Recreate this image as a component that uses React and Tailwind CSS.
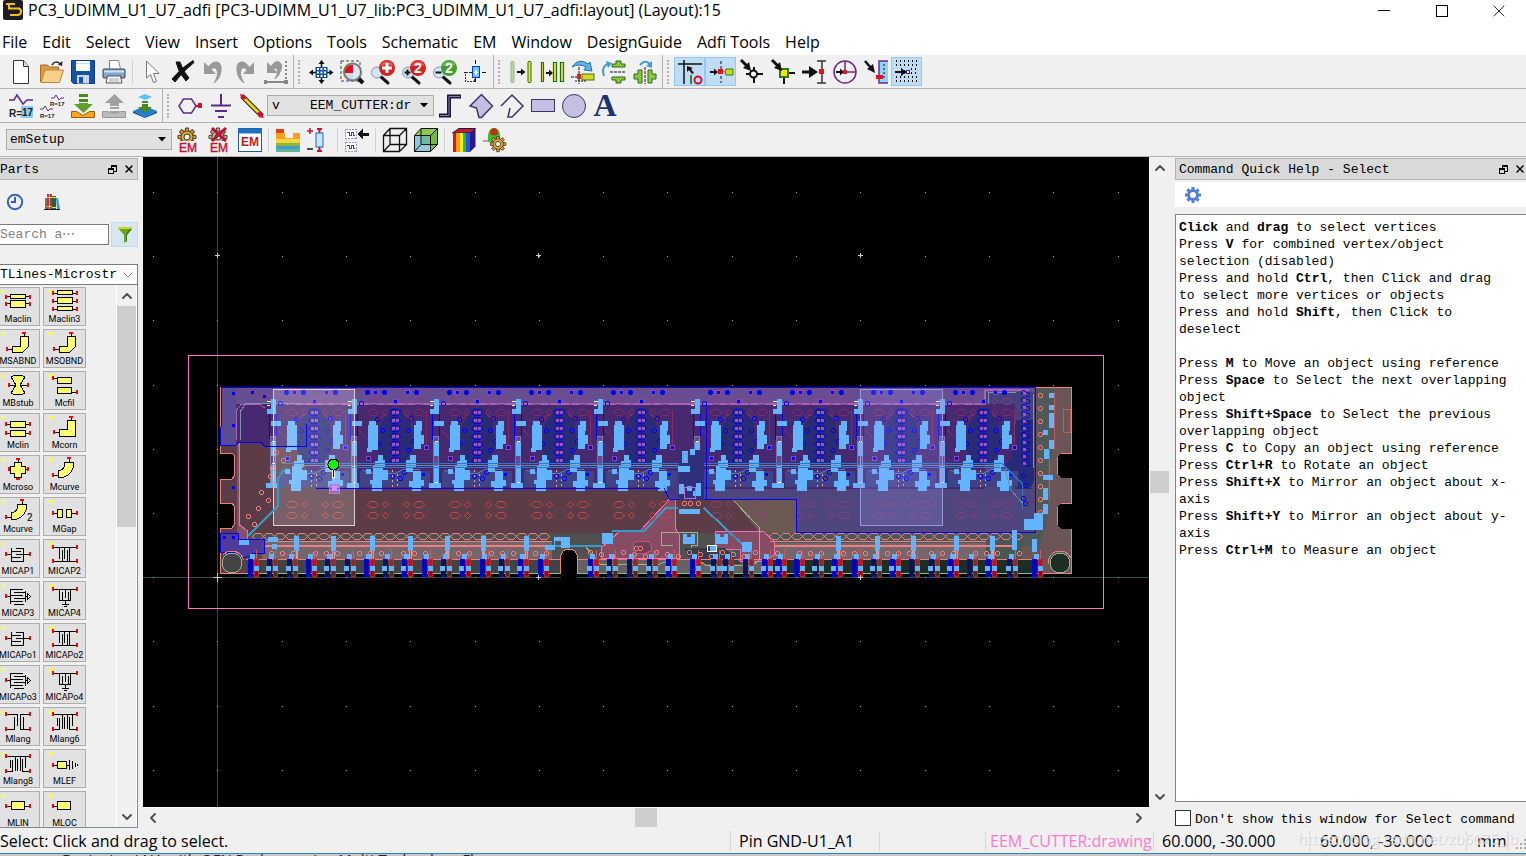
import { useState } from "react"
import { ChevronDown, ChevronLeft, ChevronRight, ChevronUp, X } from "lucide-react"

const menus = [
  "File",
  "Edit",
  "Select",
  "View",
  "Insert",
  "Options",
  "Tools",
  "Schematic",
  "EM",
  "Window",
  "DesignGuide",
  "Adfi Tools",
  "Help",
]

// ---------- toolbar building blocks ----------

function Icon({ children, crisp }) {
  return (
    <svg
      viewBox="0 0 24 24"
      className="h-6 w-6 shrink-0 overflow-visible"
      fill="none"
      shapeRendering={crisp ? "crispEdges" : undefined}
      aria-hidden="true"
    >
      {children}
    </svg>
  )
}

function ToolButton({ label, active, children }) {
  return (
    <button
      type="button"
      aria-label={label}
      aria-pressed={active}
      className={
        active
          ? "flex h-[29px] w-[31px] shrink-0 items-center justify-center border border-[#90c8f6] bg-[#c0dcf3]"
          : "flex h-[29px] w-[31px] shrink-0 items-center justify-center hover:bg-[#dcebf7]"
      }
    >
      {children}
    </button>
  )
}

function Separator() {
  return <div className="mx-[3px] h-6 w-px shrink-0 bg-[#d0d0d0]" />
}

function Grip() {
  return <div className="mr-1 ml-1 h-6 w-[3px] shrink-0 border-l-2 border-dotted border-[#b4b4b4]" />
}

function ToolGroup({ children, last }) {
  return (
    <div className={last ? "flex h-full items-center" : "flex h-full items-center border-r border-[#b4b4b4] pr-[2px]"}>
      {children}
    </div>
  )
}

function DropArrow() {
  return (
    <svg viewBox="0 0 8 5" className="pointer-events-none mr-[5px] h-[5px] w-2 shrink-0" aria-hidden="true">
      <path d="M0 0h8L4 4.500z" fill="#000" />
    </svg>
  )
}

// ---------- toolbar drawings ----------

function Magnifier({ color, sign, digit }) {
  return (
    <Icon>
      <path d="M9 16l8 7" stroke="#111" strokeWidth="3" strokeLinecap="round" />
      <circle cx="6" cy="12.500" r="5.500" fill="#cfe6f8" stroke="#8899aa" />
      <circle cx="16" cy="8" r="8" fill={color} />
      <path d="M9.500 6a7 7 0 0 1 13 0q-6-3-13 0" fill="#fff" opacity=".3" />
      {digit ? (
        <text x="16" y="13" textAnchor="middle" fontSize="14" fontWeight="700" fill="#fff" fontFamily="Liberation Sans">
          2
        </text>
      ) : (
        <path d="M16 3v10M11 8h10" stroke="#fff" strokeWidth="3" />
      )}
      {sign && <path d={sign === "+" ? "M5.500 9.500v6M2.500 12.500h6" : "M2.500 12.500h6"} stroke="#111" strokeWidth="2" />}
    </Icon>
  )
}

const gearAngles = [0, 45, 90, 135, 180, 225, 270, 315]

function Gear({ cx, cy, fill }) {
  return (
    <g transform={`translate(${cx} ${cy})`}>
      {gearAngles.map((a) => (
        <path key={a} transform={`rotate(${a})`} d="M-2-5l.5-4h3l.5 4z" fill={fill} stroke="#4a3a18" />
      ))}
      <circle r="6" fill={fill} stroke="#4a3a18" />
      <circle r="5.400" fill={fill} />
      <circle r="3" fill="#f0f0f0" stroke="#4a3a18" />
    </g>
  )
}

const icons = {
  newFile: (
    <Icon>
      <path d="M4.500 .5h10l5 6v17h-15z" fill="#fff" stroke="#333" />
      <path d="M14.500.5v6h5" fill="#ddd" stroke="#333" />
    </Icon>
  ),
  open: (
    <Icon>
      <path d="M.5 22V5h7l2 2h9v4" fill="#d99b4a" stroke="#a86c20" />
      <path d="M1 22.500L5 10h18.500l-4 12.500z" fill="#f8cf8a" stroke="#c08434" />
      <path d="M12 5q3-5 8-1.500" stroke="#222" strokeWidth="1.500" />
      <path d="M22.500 1l-.5 5-4-1.500z" fill="#222" />
    </Icon>
  ),
  save: (
    <Icon>
      <path d="M.5.5h23v23h-21l-2-2z" fill="#1453a8" stroke="#0c3c84" />
      <rect x="5" y="1" width="14" height="10" fill="#fff" />
      <path d="M5 3.500h14" stroke="#c4d8f0" />
      <rect x="6" y="15" width="12" height="8.500" fill="#cdd5de" />
      <rect x="8" y="17" width="4" height="6" fill="#1453a8" />
    </Icon>
  ),
  print: (
    <Icon>
      <path d="M7.500 9V.5h9l2 8.500" fill="#fff" stroke="#888" />
      <rect x="1" y="9" width="22" height="9" rx="1" fill="#7fa8cc" stroke="#345" />
      <path d="M2 11.500h20" stroke="#cfe2f2" strokeWidth="2" />
      <path d="M5.500 16h13l1.500 7H4z" fill="#f4f8fb" stroke="#555" />
      <path d="M7 19h10M7 21h10" stroke="#aaa" />
    </Icon>
  ),
  cursor: (
    <Icon>
      <path d="M6.500 1v17l4-3.500 3 8 3-1-3-8h5.500z" fill="#fff" stroke="#777" />
    </Icon>
  ),
  remove: (
    <Icon>
      <path d="M1 19Q10 8 22 .5l1 2Q12 11 4 22z" fill="#111" stroke="#111" />
      <path d="M5 2l4 0q2 8 9 16l-3 3Q7 12 5 2z" fill="#111" stroke="#111" />
    </Icon>
  ),
  undo: (
    <Icon>
      <path d="M5 9q5-8 10-7t4 9-7 12q5-8 3-13t-8 1z" fill="#999" stroke="#999" />
      <path d="M2 2v12h12z" fill="#999" />
    </Icon>
  ),
  redo: (
    <Icon>
      <path d="M17 9Q13 1 8 2T4 11t7 12q-5-8-3-13t7 1z" fill="#999" stroke="#999" />
      <path d="M21 2v12H10z" fill="#999" />
    </Icon>
  ),
  undoAll: (
    <Icon>
      <path d="M6 8q5-8 9-6t2 8-6 9q4-7 2-10t-5 2z" fill="#999" stroke="#999" />
      <path d="M3 2v11h11z" fill="#999" />
      <path d="M1 22h20" stroke="#888" strokeWidth="2" />
      <path d="M22 1v20" stroke="#888" strokeWidth="2" strokeDasharray="2 2" />
      <path d="M20 20h4v4h-4zM0 20h3v4H0z" fill="#888" />
    </Icon>
  ),
  pan: (
    <Icon>
      <path d="M12.500 3v4M12.500 18v4M3 12.500h4M18 12.500h4" stroke="#111" strokeWidth="1.500" />
      <path d="M12.500 0l3 4h-6zM12.500 24l3-4h-6zM0 12.500l4-3v6zM24.500 12.500l-4-3v6z" fill="#111" />
      <rect x="6.500" y="7" width="12" height="11" fill="#0a4fa0" />
      <path
        d="M8 8h2v2H8zm3.500 0h2v2h-2zM15 8h2v2h-2zM8 11.500h2v2H8zm3.500 0h2v2h-2zm3.500 0h2v2h-2zM8 15h2v2H8zm3.500 0h2v2h-2zm3.500 0h2v2h-2z"
        fill="#fff"
      />
    </Icon>
  ),
  zoomArea: (
    <Icon>
      <rect x="1" y="1" width="19" height="20" fill="#f4f4cf" stroke="#2038a0" strokeDasharray="3 2" />
      <path d="M18 18l5 5" stroke="#111" strokeWidth="4" />
      <circle cx="12.500" cy="12" r="8.500" fill="#c8d8ee" stroke="#777" strokeWidth="2" />
      <path d="M13 13V5a7 7 0 0 0-8 8z" fill="#e01020" />
      <path d="M13 12V5a7 7 0 0 1 0 14z" fill="#fff" opacity=".4" />
    </Icon>
  ),
  center: (
    <Icon crisp>
      <path d="M11.500 0v24M0 12.500h24" stroke="#111" strokeDasharray="4 2" />
      <path d="M1.500 12.500h9v9h-9z" stroke="#333" strokeDasharray="2 1" />
      <path d="M8.500 6.500h7v11h-7z" fill="#5cc8ff" stroke="#0d3bb0" />
      <path d="M11 10h2v5h-2zM10 12h4v1h-4z" fill="#fff" />
    </Icon>
  ),
  moveTo: (
    <Icon>
      <rect x="2" y="1.500" width="3" height="21" rx="1" fill="#b9d3a0" stroke="#8fbf8f" />
      <rect x="19" y="1.500" width="3" height="21" rx="1" fill="#ffe600" stroke="#1a6a2a" />
      <path d="M8 12h5" stroke="#111" strokeWidth="2" />
      <path d="M12 8.500l4.500 3.500-4.500 3.500z" fill="#111" />
    </Icon>
  ),
  copyTo: (
    <Icon>
      <path d="M1.500 2.500h2v19h-2zM13.500 2.500h3v19h-3zM20.500 2.500h3v19h-3z" fill="#ffe600" stroke="#1a6a2a" strokeWidth="1.200" />
      <path d="M6 13h4" stroke="#111" strokeWidth="2" />
      <path d="M9 9.500l4 3.500-4 3.500z" fill="#111" />
    </Icon>
  ),
  rotate: (
    <Icon>
      <path d="M1 7Q8-3 17 4l2-2 2 9-8-1 2-3Q8 3 1 7z" fill="#5db4e6" stroke="#1d6fae" />
      <path d="M8 7v17M0 17h8" stroke="#111" strokeDasharray="3 1" />
      <rect x="6" y="14" width="4" height="5" fill="#e02020" />
      <rect x="11" y="14" width="12" height="6" fill="#d8d820" stroke="#3a7a20" />
      <path d="M4 21h11" stroke="#111" strokeDasharray="2 1" />
    </Icon>
  ),
  mirrorY: (
    <Icon>
      <path d="M2 16Q-1 8 5 4" stroke="#3b9bd8" strokeWidth="2" />
      <path d="M4 1l6 2-4 5z" fill="#3b9bd8" />
      <path d="M10 7h13V4h-4V1h-5v3h-4zM10 17h13v3h-4v3h-5v-3h-4z" fill="#8cc63a" stroke="#2c6a1c" />
      <path d="M8 12h16" stroke="#111" strokeDasharray="3 1" />
    </Icon>
  ),
  mirrorX: (
    <Icon>
      <path d="M7 5q5-6 10-1" stroke="#3b9bd8" strokeWidth="2" />
      <path d="M19 1v7l-6-2z" fill="#3b9bd8" />
      <path d="M5 10h4v13H5v-4H1v-5h4zM19 10h-4v13h4v-4h4v-5h-4z" fill="#8cc63a" stroke="#2c6a1c" />
      <path d="M12 7v17" stroke="#111" strokeDasharray="3 1" />
    </Icon>
  ),
  origin: (
    <Icon>
      <path d="M6 0v24M0 4h24" stroke="#111" strokeWidth="1.500" />
      <path d="M9 6l6 2-2 1 3 4-2 1-3-4-2 2z" fill="#111" />
      <path d="M13 15v9" stroke="#2a8a3a" strokeWidth="2" />
      <circle cx="20" cy="20" r="3.500" stroke="#d01030" strokeWidth="2" />
    </Icon>
  ),
  snapPin: (
    <Icon>
      <path d="M12 1v22" stroke="#111" strokeDasharray="3 2" />
      <path d="M1 12h5" stroke="#111" strokeWidth="2" />
      <path d="M5 8.500l4 3.500-4 3.500z" fill="#111" />
      <rect x="9" y="9" width="5" height="5" fill="#e81020" />
      <path d="M14 11.500h4" stroke="#d09010" />
      <path d="M17 9h7v6h-7q-2-3 0-6z" fill="#c8d818" stroke="#2c7a1c" />
    </Icon>
  ),
  snapVertex: (
    <Icon>
      <path d="M14 7v16M6 14h17" stroke="#111" strokeWidth="2" />
      <circle cx="13.500" cy="14" r="3.500" fill="#fff" stroke="#111" strokeWidth="2" />
      <path d="M1 0l6 6" stroke="#111" strokeWidth="3" />
      <path d="M11 11L3 8l6-6z" fill="#111" />
    </Icon>
  ),
  snapMid: (
    <Icon>
      <path d="M13 18v6M18 13h6" stroke="#111" strokeWidth="2" />
      <rect x="9" y="9" width="8" height="8" fill="#ffe600" stroke="#2c7a1c" strokeWidth="2" />
      <path d="M1 0l6 6" stroke="#111" strokeWidth="3" />
      <path d="M11 11L3 8l6-6z" fill="#111" />
    </Icon>
  ),
  snapEdge: (
    <Icon>
      <path d="M15 1h9M15 23h9M20 1v22" stroke="#333" strokeWidth="1.500" />
      <path d="M0 12h8" stroke="#111" strokeWidth="3" />
      <path d="M7 6l9 6-9 6z" fill="#111" />
      <rect x="17" y="9" width="5" height="5" fill="#e81020" />
    </Icon>
  ),
  snapArc: (
    <Icon>
      <circle cx="12" cy="12" r="11" stroke="#6a2a8a" strokeWidth="1.500" />
      <path d="M12 1v11h11" stroke="#6a2a8a" strokeWidth="1.500" />
      <path d="M3 12h5" stroke="#111" strokeWidth="2" />
      <path d="M7 8.500l4 3.500-4 3.500z" fill="#111" />
      <rect x="10" y="10" width="4" height="4" fill="#e81020" />
    </Icon>
  ),
  snapIntersect: (
    <Icon>
      <path d="M24 1h-9v22h9" fill="#8fd4f4" stroke="#6a2a8a" strokeWidth="1.500" />
      <path d="M20 4v16" stroke="#111" strokeDasharray="2 2" />
      <path d="M1 1l6 7" stroke="#111" strokeWidth="2.500" />
      <path d="M11 13L3 9l6-5z" fill="#111" />
      <path d="M12 15h7v4h-7z" fill="#e81020" />
    </Icon>
  ),
  snapGrid: (
    <Icon crisp>
      <path
        d="M1 1h22M1 5h22M1 17h22M1 21h22M16 9h8M16 13h8"
        stroke="#111"
        strokeWidth="2"
        strokeDasharray="1 3"
      />
      <path d="M0 12h8" stroke="#111" strokeWidth="2" />
      <path d="M6 8l6 4-6 4z" fill="#111" />
      <path d="M11.500 10.500h3v3h-3z" fill="#fff" stroke="#4020a0" />
    </Icon>
  ),
  tune: (
    <Icon>
      <path d="M0 6h5l3-5 6 9 4-4h6" stroke="#5a2a8a" strokeWidth="1.500" />
      <rect x="12" y="12" width="12" height="12" fill="#8fc8ee" />
      <text x="0" y="23" fontSize="10" fontWeight="700" fill="#222" fontFamily="Liberation Sans">
        R=
      </text>
      <text x="13" y="22" fontSize="10" fontWeight="700" fill="#112233" fontFamily="Liberation Sans">
        17
      </text>
    </Icon>
  ),
  tuneAll: (
    <Icon>
      <path d="M11 4h3l2-3 3 5 2-2h3M0 15h3l2-3 3 5 2-2h3" stroke="#5a2a8a" />
      <text x="10" y="12" fontSize="6" fontWeight="700" fill="#222" fontFamily="Liberation Sans">
        R=17
      </text>
      <text x="0" y="24" fontSize="6" fontWeight="700" fill="#222" fontFamily="Liberation Sans">
        R=17
      </text>
    </Icon>
  ),
  importDown: (
    <Icon>
      <path d="M.5 17.500h5l6.500 4 6.500-4h5v6H.5z" fill="#f8a818" stroke="#9a5a10" />
      <path d="M8 0h9v3H8zM8 5h9v3H8z" fill="#4a8a1c" />
      <path d="M8 9h9v1h5l-9.500 9L3 10h5z" fill="#5fa02a" />
    </Icon>
  ),
  exportUp: (
    <Icon>
      <path d="M.5 17.500h5l6.500 2 6.500-2h5v6H.5z" fill="#bbb" stroke="#999" />
      <path d="M12.500 0L22 9h-5v3H8V9H3zM8 13h9v2H8zM8 17h9v2H8z" fill="#a0a0a0" />
    </Icon>
  ),
  stackDown: (
    <Icon>
      <path d="M0 17l12-5 12 5-12 6z" fill="#1f7fd0" />
      <path d="M0 17v2l12 5 12-5v-2l-12 6z" fill="#0c4f98" />
      <path d="M5 3l7-3 7 3-7 3z" fill="#5ac0f4" />
      <path d="M9 7h6v2H9zM9 10h6v3h4l-7 6-7-6h4z" fill="#4a8a1c" />
    </Icon>
  ),
  pin: (
    <Icon>
      <path d="M5.500 5h8l4.500 7-4.500 7h-8L1 12z" stroke="#5a2a8a" strokeWidth="1.500" />
      <path d="M18 12h3" stroke="#d01030" strokeWidth="2" />
      <rect x="20" y="9" width="4" height="5" fill="#d01030" />
    </Icon>
  ),
  ground: (
    <Icon>
      <path d="M12 0v11M2 11.500h20M6 17h12M9 23h6" stroke="#5a2a8a" strokeWidth="2" />
    </Icon>
  ),
  pencil: (
    <Icon>
      <path d="M2 2l20 20" stroke="#222" strokeWidth="5" />
      <path d="M3 3l18 18" stroke="#e8d820" strokeWidth="3" />
      <path d="M0 0l4 1 2 4-4 1zM24 24l-5-1-2-4 4-2z" fill="#e01028" />
    </Icon>
  ),
  path: (
    <Icon>
      <path d="M1 21.500h10v-19h12" stroke="#1b1836" strokeWidth="4" />
      <path d="M2 21.500h9v-19h11" stroke="#8a7ab8" />
    </Icon>
  ),
  polygon: (
    <Icon>
      <path d="M1 12L12.500.5l11 11.500-11 11.500H10L7.500 14z" fill="#c3c0e4" stroke="#3a3664" strokeWidth="1.500" />
    </Icon>
  ),
  polyline: (
    <Icon>
      <path d="M1 12L12 1l11 11-11 11H8l2-9" stroke="#3a3664" strokeWidth="1.500" />
    </Icon>
  ),
  rect: (
    <Icon>
      <rect x=".5" y="5.500" width="23" height="12" fill="#c3c0e4" stroke="#3a3664" />
    </Icon>
  ),
  circle: (
    <Icon>
      <circle cx="12" cy="12" r="11.500" fill="#c3c0e4" stroke="#3a3664" />
    </Icon>
  ),
  text: (
    <Icon>
      <text x="12" y="22" textAnchor="middle" fontSize="32" fontWeight="700" fill="#1a3470" fontFamily="Liberation Serif">
        A
      </text>
    </Icon>
  ),
  emSetup: (
    <Icon>
      <Gear cx={11} cy={9} fill="#d9a441" />
      <rect x="0" y="13" width="24" height="11" fill="#f0f0f0" />
      <text x="12" y="24" textAnchor="middle" fontSize="12" fill="#c01030" stroke="#c01030" strokeWidth=".4" fontFamily="Liberation Sans">
        EM
      </text>
    </Icon>
  ),
  emStop: (
    <Icon>
      <Gear cx={11} cy={9} fill="#b8b8b8" />
      <rect x="0" y="13" width="24" height="11" fill="#f0f0f0" />
      <path d="M5 0l14 13M19 0L5 13" stroke="#c01030" strokeWidth="3" />
      <text x="12" y="24" textAnchor="middle" fontSize="12" fill="#c01030" stroke="#c01030" strokeWidth=".4" fontFamily="Liberation Sans">
        EM
      </text>
    </Icon>
  ),
  emWindow: (
    <Icon>
      <rect x=".5" y=".5" width="23" height="23" fill="#fff" stroke="#1a5aa8" />
      <path d="M0 3h24" stroke="#1f6fc0" strokeWidth="5" />
      <text x="12" y="18" textAnchor="middle" fontSize="12" fontWeight="700" fill="#c01818" fontFamily="Liberation Sans">
        EM
      </text>
    </Icon>
  ),
  substrate: (
    <Icon crisp>
      <path d="M0 1h8v4H0z" fill="#e04020" />
      <path d="M0 5h9v5h8V5h7v7H0z" fill="#f8a020" />
      <path d="M0 11h24v4H0z" fill="#f4d840" />
      <path d="M0 15h24v3H0z" fill="#8cb83a" />
      <path d="M0 18h24v3H0z" fill="#4a98c8" />
      <path d="M0 21h24v3H0z" fill="#58b898" />
    </Icon>
  ),
  port: (
    <Icon>
      <path d="M3 0v6M0 3h6" stroke="#c01030" strokeWidth="1.500" />
      <path d="M0 21h6" stroke="#111" strokeWidth="1.500" />
      <path d="M12.500 0v24M10 1h5M10 23h5" stroke="#c01030" strokeWidth="2" />
      <rect x="9" y="5" width="7" height="14" fill="#c4e8f8" stroke="#2860c0" />
    </Icon>
  ),
  portEdit: (
    <Icon crisp>
      <path d="M.5 1.500h11v9H.5zM.5 14.500h11v9H.5z" fill="#fff" stroke="#8898d8" strokeDasharray="2 1" />
      <path d="M2 4.500h2v3h2v-3h2v3h2M2 17.500h2v3h2v-3h2v3h2" stroke="#444488" />
      <path d="M15 6h9" stroke="#111" strokeWidth="3" />
      <path d="M12 6l6-5v10z" fill="#111" />
    </Icon>
  ),
  cube: (
    <Icon>
      <path
        d="M.5 7.500h16v16H.5zM7 .5h16.500v16H7zM.5 7.500L7 .5M16.500 7.500l7-7M.5 23.500L7 16.500M16.500 23.500l7-7"
        stroke="#111"
        strokeWidth="1.300"
      />
    </Icon>
  ),
  cubeSolid: (
    <Icon>
      <path d="M.5 7.500L7 .5h16.500l-7 7z" fill="#8fc850" />
      <path d="M16.500 7.500l7-7v16l-7 7z" fill="#78b838" />
      <path d="M.5 7.500h16v16H.5z" fill="#90c8e0" />
      <path d="M7 7.500h9.500v9H7z" fill="#70b8a0" />
      <path d="M.5 7.500h16v16H.5zM7 .5h16.500v16H7zM.5 7.500L7 .5M16.500 7.500l7-7M.5 23.500L7 16.500M16.500 23.500l7-7" stroke="#111" />
    </Icon>
  ),
  fieldView: (
    <Icon>
      <path d="M.5 5L7 .5h16.500l-5 4.500z" fill="#c02020" stroke="#201060" />
      <path d="M1 5h3v19H1z" fill="#d81818" />
      <path d="M4 5h4v19H4z" fill="#f8a010" />
      <path d="M8 5h3v19H8z" fill="#f4f020" />
      <path d="M11 5h3v19h-3z" fill="#30b830" />
      <path d="M14 5h4v19h-4z" fill="#2058e0" />
      <path d="M18 5l5.500-4.500v18L18 24z" fill="#281888" />
    </Icon>
  ),
  farField: (
    <Icon>
      <path d="M0 13h10" stroke="#e03030" />
      <path d="M5 14Q4 0 11 0t6 12q-3 4-7 3T5 14" fill="#38c030" />
      <path d="M7 6q0-6 4-6t4 6q-4 3-8 0" fill="#c03010" />
      <g transform="translate(4 5) scale(.85)">
        <Gear cx={13} cy={13} fill="#d9a441" />
      </g>
    </Icon>
  ),
}

function Toolbars() {
  return (
    <div className="shrink-0 bg-[#f0f0f0]">
      <div className="flex h-[34px] items-center border-b border-[#b4b4b4]">
        <ToolGroup>
          <div className="w-[5px]" />
          <ToolButton label="New">{icons.newFile}</ToolButton>
          <ToolButton label="Open">{icons.open}</ToolButton>
          <ToolButton label="Save">{icons.save}</ToolButton>
          <ToolButton label="Print">{icons.print}</ToolButton>
          <Separator />
          <ToolButton label="Pointer">{icons.cursor}</ToolButton>
          <ToolButton label="Delete">{icons.remove}</ToolButton>
          <ToolButton label="Undo">{icons.undo}</ToolButton>
          <ToolButton label="Redo">{icons.redo}</ToolButton>
          <ToolButton label="Undo vertex">{icons.undoAll}</ToolButton>
        </ToolGroup>
        <ToolGroup>
          <Grip />
          <ToolButton label="View all">{icons.pan}</ToolButton>
          <ToolButton label="Zoom area">{icons.zoomArea}</ToolButton>
          <ToolButton label="Zoom in point">
            <Magnifier color="#d8201c" />
          </ToolButton>
          <ToolButton label="Zoom in by 2">
            <Magnifier color="#d8201c" sign="+" digit />
          </ToolButton>
          <ToolButton label="Zoom out by 2">
            <Magnifier color="#3fa02c" sign="-" digit />
          </ToolButton>
          <ToolButton label="Center">{icons.center}</ToolButton>
        </ToolGroup>
        <ToolGroup>
          <Grip />
          <ToolButton label="Move">{icons.moveTo}</ToolButton>
          <ToolButton label="Copy">{icons.copyTo}</ToolButton>
          <ToolButton label="Rotate">{icons.rotate}</ToolButton>
          <ToolButton label="Mirror about X">{icons.mirrorY}</ToolButton>
          <ToolButton label="Mirror about Y">{icons.mirrorX}</ToolButton>
        </ToolGroup>
        <ToolGroup last>
          <Grip />
          <ToolButton label="Set origin" active>
            {icons.origin}
          </ToolButton>
          <ToolButton label="Snap to pin" active>
            {icons.snapPin}
          </ToolButton>
          <ToolButton label="Snap to vertex">{icons.snapVertex}</ToolButton>
          <ToolButton label="Snap to midpoint">{icons.snapMid}</ToolButton>
          <ToolButton label="Snap to edge">{icons.snapEdge}</ToolButton>
          <ToolButton label="Snap to arc center">{icons.snapArc}</ToolButton>
          <ToolButton label="Snap to intersection">{icons.snapIntersect}</ToolButton>
          <ToolButton label="Snap to grid" active>
            {icons.snapGrid}
          </ToolButton>
        </ToolGroup>
      </div>

      <div className="flex h-[34px] items-center border-b border-[#b4b4b4]">
        <ToolGroup>
          <div className="w-[5px]" />
          <ToolButton label="Tune parameter">{icons.tune}</ToolButton>
          <ToolButton label="Tune all">{icons.tuneAll}</ToolButton>
          <ToolButton label="Push into">{icons.importDown}</ToolButton>
          <ToolButton label="Pop out">{icons.exportUp}</ToolButton>
          <ToolButton label="Layers">{icons.stackDown}</ToolButton>
        </ToolGroup>
        <ToolGroup last>
          <Grip />
          <ToolButton label="Insert pin">{icons.pin}</ToolButton>
          <ToolButton label="Insert ground">{icons.ground}</ToolButton>
          <ToolButton label="Insert trace">{icons.pencil}</ToolButton>
          <div className="flex h-[21px] w-[167px] items-center border border-[#adadad] bg-[#e1e1e1] font-['Liberation_Mono'] text-[13px]">
            <span className="w-[42px] pl-1">v</span>
            <select aria-label="Entry layer" className="min-w-0 flex-1 appearance-none bg-transparent outline-none">
              <option>EEM_CUTTER:dr</option>
            </select>
            <DropArrow />
          </div>
          <ToolButton label="Insert path">{icons.path}</ToolButton>
          <ToolButton label="Insert polygon">{icons.polygon}</ToolButton>
          <ToolButton label="Insert polyline">{icons.polyline}</ToolButton>
          <ToolButton label="Insert rectangle">{icons.rect}</ToolButton>
          <ToolButton label="Insert circle">{icons.circle}</ToolButton>
          <ToolButton label="Insert text">{icons.text}</ToolButton>
        </ToolGroup>
      </div>

      <div className="flex h-[34px] items-center border-b border-[#b4b4b4] pl-[6px]">
        <div className="flex h-[21px] w-[166px] items-center border border-[#adadad] bg-[#e1e1e1] font-['Liberation_Mono'] text-[13px]">
          <select aria-label="EM setup" className="min-w-0 flex-1 appearance-none bg-transparent pl-[3px] outline-none">
            <option>emSetup</option>
          </select>
          <DropArrow />
        </div>
        <ToolButton label="EM setup">{icons.emSetup}</ToolButton>
        <ToolButton label="Stop EM">{icons.emStop}</ToolButton>
        <ToolButton label="EM window">{icons.emWindow}</ToolButton>
        <Separator />
        <ToolButton label="Substrate">{icons.substrate}</ToolButton>
        <ToolButton label="Port editor">{icons.port}</ToolButton>
        <Separator />
        <ToolButton label="Edit ports">{icons.portEdit}</ToolButton>
        <Separator />
        <ToolButton label="Wireframe view">{icons.cube}</ToolButton>
        <ToolButton label="Solid view">{icons.cubeSolid}</ToolButton>
        <Separator />
        <ToolButton label="Field view">{icons.fieldView}</ToolButton>
        <ToolButton label="Far field">{icons.farField}</ToolButton>
      </div>
    </div>
  )
}

// ---------- parts palette ----------

const body = { fill: "#ffff70", stroke: "#000" }

function Pins({ d }) {
  return <path d={d} stroke="#f00" strokeWidth="2" />
}

const partShapes = {
  coupled: (
    <>
      <path d="M2 7.500h24M2 14.500h24" stroke="#000" />
      <path d="M6.500 5.500h15v4h-15zM6.500 11.500h15v7h-15z" {...body} />
      <Pins d="M2 6v4M26 6v4M2 13v4M26 13v4" />
    </>
  ),
  coupled3: (
    <>
      <path d="M2 4h24M2 12h24M2 20h24" stroke="#000" />
      <path d="M6.500 1.500h15v4h-15zM6.500 8.500h15v6h-15zM6.500 17.500h15v4h-15z" {...body} />
      <Pins d="M2 2v4M26 2v4M2 10v4M26 10v4M2 18v4M26 18v4" />
    </>
  ),
  bend: (
    <>
      <path d="M20 2v4M3 18h5" stroke="#000" />
      <path d="M16 5h8v11l-5 5H8v-6h8z" {...body} />
      <Pins d="M18 2h4M3 16v4" />
    </>
  ),
  stub: (
    <>
      <path d="M4 12h20" stroke="#000" />
      <path d="M7 4q7-4 14 0l-5 8 5 8q-7 4-14 0l5-8z" {...body} />
      <Pins d="M5 10v4M24 10v4" />
    </>
  ),
  filter: (
    <>
      <path d="M3 5h4M21 19h5" stroke="#000" />
      <path d="M6.500 4.500h14v6h-14zM6.500 14.500h14v6h-14z" {...body} />
      <Pins d="M2 3v4M26 17v4" />
    </>
  ),
  lines: (
    <>
      <path d="M2 9h24M2 18h24" stroke="#000" />
      <path d="M6.500 6.500h15v6h-15zM6.500 15.500h15v6h-15z" {...body} />
      <Pins d="M2 7v4M26 7v4M2 16v4M26 16v4" />
    </>
  ),
  corner: (
    <>
      <path d="M20 2v4M3 17h5" stroke="#000" />
      <path d="M16 5h8v16H8v-7h8z" {...body} />
      <Pins d="M18 2h4M3 15v4" />
    </>
  ),
  cross: (
    <>
      <path d="M14 2v20M4 12h20" stroke="#000" />
      <path d="M10 5h7v4h4v7h-4v4h-7v-4H6V9h4z" {...body} />
      <Pins d="M12 2h4M12 22h4M5 10v4M24 10v4" />
    </>
  ),
  curve: (
    <>
      <path d="M18 1v4M2 18h5" stroke="#000" />
      <path d="M14 5h8v6q-2 9-15 10v-7q7-1 7-9z" {...body} />
      <Pins d="M16 1h4M2 16v4" />
    </>
  ),
  gap: (
    <>
      <path d="M2 14h24" stroke="#000" />
      <path d="M11 10h7v9h-7z" fill="#e1e1e1" />
      <path d="M6.500 10.500h5v8h-5zM15.500 10.500h5v8h-5z" {...body} />
      <Pins d="M2 12v4M26 12v4" />
    </>
  ),
  cap: (
    <>
      <path d="M2 13.500h6M7.500 7v14M7 20.500h12M12 7.500h8M7 10.500h10M12 13.500h8M7 16.500h10M19.500 7v14M20 13.500h6" stroke="#000" />
      <Pins d="M2 11v4M26 11v4" />
    </>
  ),
  capWide: (
    <>
      <path d="M2 6.500h24M2 20.500h24M8.500 6v12M11.500 9v12M13.500 6v12M16.500 9v12M18.500 6v14" stroke="#000" />
      <Pins d="M2 4v4M26 4v4M2 18v4M26 18v4" />
    </>
  ),
  capTri: (
    <>
      <path
        d="M2 13.500h4M6.500 6v15M6 6.500h13M10 9.500h12M6 12.500h13M10 15.500h12M6 18.500h13M10 21.500h10M21.500 8v11M22 13.500h2M23.500 10.500l3 3-3 3z"
        stroke="#000"
      />
      <Pins d="M2 11v4" />
    </>
  ),
  capGnd: (
    <>
      <path d="M2 6.500h24M8.500 6v11M11.500 9v8M14.500 6v9M17.500 9v8M19.500 6v11M8 17.500h12M14.500 17v4M11 21.500h7M13 23.500h3" stroke="#000" />
      <Pins d="M2 4v4M26 4v4" />
    </>
  ),
  lange: (
    <>
      <path d="M2 5.500h12M13.500 5v12M16.500 5v15M16 5.500h10M10.500 8v12M2 20.500h9M16 20.500h10M19.500 8v12" stroke="#000" />
      <Pins d="M2 3v4M26 3v4M2 18v4M26 18v4" />
    </>
  ),
  langeDense: (
    <>
      <path
        d="M2 5.500h24M2 20.500h7M18 20.500h8M8.500 9v12M11.500 5v15M13.500 8v12M16.500 5v15M18.500 8v12M21.500 5v12M6.500 9v8"
        stroke="#000"
      />
      <Pins d="M2 3v4M26 3v4M2 18v4M26 18v4" />
    </>
  ),
  openEnd: (
    <>
      <path d="M2 14h5M16 14h3M18.500 9v10M21.500 10v8M24.500 12v4M26.500 13v2" stroke="#000" />
      <path d="M6.500 10.500h9v7h-9z" {...body} />
      <Pins d="M2 12v4" />
    </>
  ),
  line: (
    <>
      <path d="M2 13h24" stroke="#000" />
      <path d="M7.500 8.500h13v8h-13z" {...body} />
      <Pins d="M2 11v4M26 11v4" />
    </>
  ),
  lineOpen: (
    <>
      <path d="M2 13h6" stroke="#000" />
      <path d="M6.500 8.500h13v8h-13z" {...body} />
      <Pins d="M2 11v4" />
    </>
  ),
}

const parts = [
  ["Maclin", "coupled"],
  ["Maclin3", "coupled3"],
  ["MSABND", "bend"],
  ["MSOBND", "bend"],
  ["MBstub", "stub"],
  ["Mcfil", "filter"],
  ["Mclin", "lines"],
  ["Mcorn", "corner"],
  ["Mcroso", "cross"],
  ["Mcurve", "curve"],
  ["Mcurve", "curve", "2"],
  ["MGap", "gap"],
  ["MICAP1", "cap"],
  ["MICAP2", "capWide"],
  ["MICAP3", "capTri"],
  ["MICAP4", "capGnd"],
  ["MICAPo1", "cap"],
  ["MICAPo2", "capWide"],
  ["MICAPo3", "capTri"],
  ["MICAPo4", "capGnd"],
  ["Mlang", "lange"],
  ["Mlang6", "langeDense"],
  ["Mlang8", "langeDense"],
  ["MLEF", "openEnd"],
  ["MLIN", "line"],
  ["MLOC", "lineOpen"],
]

function PartButton({ name, shape, mark, left }) {
  return (
    <button
      type="button"
      className={
        left
          ? "flex h-[39px] flex-col items-center border border-l-0 border-[#adadad] bg-[#e1e1e1] pt-px pr-[3px]"
          : "flex h-[39px] flex-col items-center border border-[#adadad] bg-[#e1e1e1] pt-px"
      }
    >
      <svg viewBox="-2 0 32 24" className="h-6 w-8 shrink-0 overflow-visible" fill="none" shapeRendering="crispEdges" aria-hidden="true">
        <path d="M-2 2h4M-2 4h2" stroke="#ffff40" strokeWidth="2" strokeDasharray="2 1" />
        {partShapes[shape]}
        {mark && (
          <text x="23" y="22" fontSize="10" fill="#000" fontFamily="Liberation Sans">
            {mark}
          </text>
        )}
      </svg>
      <span className="font-['Roboto'] text-[9px] leading-[12px] text-black">{name}</span>
    </button>
  )
}

function RestoreIcon() {
  return (
    <svg viewBox="0 0 9 9" className="h-[9px] w-[9px]" fill="none" shapeRendering="crispEdges" aria-hidden="true">
      <path d="M3 3V0M3 1h6M8.500 1v5H6" stroke="#000" strokeWidth="1" />
      <path d="M3 .500h6" stroke="#000" />
      <path d="M.5 3.500h5v5h-5zM0 4.500h6" stroke="#000" />
    </svg>
  )
}

function DockTitle({ children, side }) {
  return (
    <div
      className={
        side === "left"
          ? "mt-px flex h-[22px] shrink-0 items-center border border-l-0 border-[#b4b4b4] bg-[#d9d9d9]"
          : "mt-px flex h-[22px] shrink-0 items-center border border-r-0 border-[#b4b4b4] bg-[#d9d9d9] pl-[3px]"
      }
    >
      <h2 className="flex-1 pt-[2px] font-['Liberation_Mono'] text-[13px] whitespace-nowrap text-black">{children}</h2>
      <button type="button" aria-label="Float panel" className="px-1">
        <RestoreIcon />
      </button>
      <button type="button" aria-label="Close panel" className={side === "left" ? "px-[2px]" : "pl-[2px]"}>
        <X className="h-3 w-3" strokeWidth={3} />
      </button>
    </div>
  )
}

function PartsPanel() {
  const [search, setSearch] = useState("")

  return (
    <aside className="flex w-[138px] shrink-0 flex-col">
      <DockTitle side="left">Parts</DockTitle>
      <div className="flex h-[42px] shrink-0 items-center gap-5 pt-[2px] pl-[6px]">
        <button type="button" aria-label="Recent parts">
          <svg viewBox="0 0 18 18" className="h-[18px] w-[18px]" fill="none" aria-hidden="true">
            <circle cx="9" cy="9" r="7.200" stroke="#2f62b8" strokeWidth="2" />
            <path d="M9 4v5H5" stroke="#2f62b8" strokeWidth="2" />
          </svg>
        </button>
        <button type="button" aria-label="Part library">
          <svg viewBox="0 0 16 16" className="h-4 w-4" aria-hidden="true">
            <path d="M1 4h2v11H1z" fill="#8a7048" />
            <path d="M3 0h2v15H3zM6 0h2v15H6z" fill="#b83040" />
            <path d="M5 0h1v15H5z" fill="#e0a0a0" />
            <path d="M3 3h5v1H3zM3 12h5v1H3z" fill="#f0c0a0" />
            <path d="M8 2h4v13H8z" fill="#1a6a30" />
            <path d="M8 3h4v1H8zM8 13h4v1H8z" fill="#e8e040" />
            <path d="M12 4h2l2 11h-3z" fill="#4a90d0" />
            <path d="M0 15h16v1H0z" fill="#222" />
          </svg>
        </button>
      </div>
      <div className="flex h-[25px] shrink-0 items-center justify-between">
        <input
          type="text"
          aria-label="Search all parts"
          value={search}
          onChange={(e) => setSearch(e.target.value)}
          placeholder="Search a⋯"
          className="h-[21px] w-[109px] border border-l-0 border-[#7a7a7a] bg-white font-['Liberation_Mono'] text-[13px] outline-none placeholder:text-[#7f7f7f]"
        />
        <button
          type="button"
          aria-label="Filter"
          className="flex h-[25px] w-[27px] items-center justify-center border border-[#bcdcf4] bg-[#d8e6f1]"
        >
          <svg viewBox="0 0 14 16" className="h-4 w-[14px]" aria-hidden="true">
            <path d="M0 1h14L9 8v6l-3 2V8z" fill="#6aa81c" />
            <path d="M0 0h14v2H0z" fill="#c8d820" />
            <path d="M9 8v6l-1 1V7l4-5h2z" fill="#3a7a14" />
          </svg>
        </button>
      </div>
      <div className="mt-[17px] flex h-[21px] shrink-0 items-center border border-l-0 border-[#7a7a7a] bg-white">
        <select
          aria-label="Palette"
          className="min-w-0 flex-1 appearance-none bg-transparent font-['Liberation_Mono'] text-[13px] text-black outline-none"
        >
          <option>TLines-Microstr</option>
        </select>
        <ChevronDown className="pointer-events-none mr-px h-4 w-4 shrink-0 text-[#444]" strokeWidth={1} />
      </div>
      <div className="flex min-h-0 flex-1 border-r border-b border-[#828790]">
        <div className="grid min-h-0 flex-1 grid-cols-[40px_43px] content-start gap-[3px] overflow-hidden pt-[2px]">
          {parts.map(([name, shape, mark], i) => (
            <PartButton key={i} name={name} shape={shape} mark={mark} left={i % 2 === 0} />
          ))}
        </div>
        <div className="flex w-[21px] shrink-0 flex-col items-center border-x border-white bg-[#f0f0f0]">
          <button type="button" aria-label="Scroll parts up" className="flex h-[21px] items-center">
            <ChevronUp className="h-4 w-4 text-[#505050]" strokeWidth={3} />
          </button>
          <div className="h-[221px] w-full shrink-0 bg-[#cdcdcd]" />
          <div className="flex-1" />
          <button type="button" aria-label="Scroll parts down" className="flex h-[21px] items-center">
            <ChevronDown className="h-4 w-4 text-[#505050]" strokeWidth={3} />
          </button>
        </div>
      </div>
    </aside>
  )
}

// ---------- board drawing ----------

const SKY = "#63b4ff"
const range = (n) => Array.from({ length: n }, (_, i) => i)

const chipColumns = [273, 354, 436, 518, 600, 697, 779, 860, 942]
const capColumns = [296, 333, 372, 410, 447, 483, 526, 838, 877, 913, 956, 992]
const fingerColumns = [
  ...range(16).map((i) => Math.round(248 + i * 19.3)),
  588, 607, 627, 647, 666, 690, 711, 723, 743, 762, 776, 794, 813, 832, 852, 871, 890, 909, 929, 948, 967, 986, 1007,
  1032,
]

const hexAt = (x, y) => `M${x - 5.5} ${y + 0.5}l3-3h5l3 3-3 3h-5z`
const diamondAt = (x, y) => `M${x - 2.5} ${y + 0.5}l3-3 3 3-3 3z`
const ringAt = (x, y) => `M${x - 1.5} ${y - 0.5}l1-1h2l1 1v2l-1 1h-2l-1-1z`

function hexRow(y) {
  return hexAt(19, y) + diamondAt(31, y) + diamondAt(52, y) + hexAt(65, y)
}

const chipVias = [
  [23, 419],
  [28, 430],
  [24, 443],
  [57, 418],
  [54, 430],
  [59, 441],
  [54, 450],
  [30, 463],
  [38, 476],
  [46, 478],
  [50, 472],
  [56, 464],
  [7, 403],
]

// one memory chip footprint with its decoupling parts, drawn from its left edge
function Chip({ x }) {
  return (
    <g transform={`translate(${x} 0)`}>
      <path d="M36 408h11l9 14 3 26-9 16H32l-8-14 2-24z" fill="#292b74" />
      <path d="M6 471h70v16H6z" fill="#404486" />
      <path d={hexRow(412)} stroke="#8c2864" />
      <path d={hexRow(401)} stroke="#8a3a88" />
      <path d="M5 430l10 10v8M50 414l8 6M32 414l-8 6M12 456l4 6M72 410v36" stroke="#8c2864" />
      <path d="M-4 414v26M3 414v22" stroke="#0000ff" />
      <path d="M-2.500 436h5v48h-5z" fill="#5c4c98" stroke="#9a8ac8" strokeOpacity=".7" />
      <path d="M8 470l10 3h24l8-4h16" stroke="#6a78a8" />
      {range(7).map((i) => (
        <g key={i}>
          <path d={hexAt(41, 412 + i * 8)} stroke="#0000ff" />
          <path d={`M38 ${411 + i * 8}h3v3h-3zM42 ${411 + i * 8}h3v3h-3z`} fill="#a052b8" />
        </g>
      ))}
      <path d={chipVias.map(([cx, cy]) => ringAt(cx, cy)).join("")} stroke="#0000ff" />
      <path d="M38.500 470v18M43.500 474v14" stroke="#f0a080" strokeDasharray="2 3" />
      <path
        d="M11 391h5v3h-5zM12 390h3v5h-3zM28 391h5v3h-5zM29 390h3v5h-3zM60 391h5v3h-5zM61 390h3v5h-3zM20 391h3v3h-3zM52 391h3v3h-3zM40 400h3v3h-3zM13 457h3v3h-3zM71 446h3v3h-3zM68 473h3v3h-3z"
        fill="#0000ff"
      />
      <path d="M19.500 390.500h4v4h-4zM51.500 390.500h4v4h-4zM39.500 399.500h4v4h-4zM12.500 456.500h4v4h-4zM70.500 445.500h4v4h-4z" stroke="#8a48b0" />
      <path
        d="M-2 399h5v15h-9v-5h4zM-2 421h10v5h-10zM-2 442h5v14h-5zM-2 465h5v18h2v5h-12v-5h5zM15 421h7v4h2v25h-6v2h-5v-4h1v-23h1zM62 421h6v10h-1v4h3v9h-3v5h-7v-24h2zM24 455h5v5h2v7h-10v-6h3zM12 469h5v5h-5zM19 466h10v4h5v10h-6v11h-10v-7h-2v-4h3zM52 460h4v-5h6v12h-3v5h-7zM59 471h8v9h3v6h-3v5h-9v-4h-3v-6h4z"
        fill={SKY}
      />
      <path d="M-1 441.500h3M-1 463.500h3M-1 482.500h3M-6 401.500h4M-6 405.500h3" stroke="#fff" />
    </g>
  )
}

function Finger({ x, flip }) {
  return (
    <g>
      <path d={`M${x + 6.5} 559.500h4v17h-4z`} fill="#5a2428" stroke="#e01010" />
      <path d={`M${x + 6} 559h5v12h-5z`} fill="#c03030" fillOpacity=".5" />
      <path d={`M${x + 0.5} 559.500h4v17h-4z`} fill="#101060" stroke="#0000ff" />
      <path d={`M${x + 8.5} 550v9`} stroke="#d05a5a" />
      <path
        d={flip ? `M${x + 2} 554h5v5h-5zM${x - 1} 566h5v5h-5zM${x + 6} 566h5v5h-5z` : `M${x + 2} 554h5v5h-5zM${x + 6} 566h5v5h-5z`}
        fill={SKY}
      />
    </g>
  )
}

const boardOutline =
  "M221 387.500H1071V453H1061L1057 457V474L1061 478H1071V503H1061L1057 507V525L1061 529H1071V573H577V558Q577 549 569 549Q561 549 561 558V573H220V528H232L234 525V506L232 503H220V479H232L234 476V455L232 453H220V445Z"

const pourText = {
  ridge: "M246 533h515v26H246z",
}

function Board() {
  return (
    <g fill="none">
      <path d={boardOutline} fill="#5c3c46" stroke="#f08080" />

      {/* edge strip on the right */}
      <path d="M1036 388h35v65h-10l-4 4v17l4 4h10v25h-10l-4 4v18l4 4h10v44h-65V533h29z" fill="#6c5557" />
      <path d="M1037 388h17v60l-6 20v48l-8 30h-20v-13h17z" fill="#4f5a58" />
      <path d="M1063.500 409.500h7v23h-7zM1054.500 392v58M1049.500 450v50" stroke="#c85858" />

      {/* lower routing band */}
      <path d={pourText.ridge} fill="#50504f" />
      <path d="M762 533h260v26H762z" fill="#4c5653" />
      <path d="M262 541h290v18H262zM770 543h216v16H770z" fill="#76656b" />
      <path d="M246 559h314v14H246z" fill="#454243" />
      <path d="M578 559h184v14H578z" fill="#66605f" />
      <path d="M762 559h278v14H762z" fill="#1f2e24" />

      {/* copper pours */}
      <path d="M233 388h6v135l8 8v9h-10V443z" fill="#86506a" />
      <path d="M239.500 443v82l8 6v9" stroke="#ff69b4" />
      <path d="M733 500h63v32h174v1H760z" fill="#6b5954" />
      <path d="M676 492l-36 39h-20l-19 17v10h78v-24l-4-6v-36z" fill="#854c64" stroke="#ff69b4" />
      <path d="M715 531h48l11 10v14l-10 6h-24v-12h-25z" fill="#854c64" stroke="#ff69b4" />
      <path d="M733 500l26 27v33l-6 5h-48l-14-12v-8h6v-13h-36v13h12M585 546l15 18h60l14-6" stroke="#9ab58c" />
      <path d="M684 548h40l18 16h-36l-18-8z" fill="#383c48" />
      <path d="M633 544l4-3h12l2 4v6l-5 2h-10l-3-3z" fill="#6e4058" stroke="#d05070" />

      {/* blue plane */}
      <path
        d="M221 388H1035V532H796V499H669L660 489H316L306 478V446H264L261 442H238L236 445H220V427H221Z"
        fill="#50467e"
      />
      <path d="M236 404H985V489H316l-10-11v-32h-42l-3-4h-25z" fill="#46296f" />
      <path d="M221 388h814v16H221z" fill="#684d90" />
      <path d="M221 388h15v57h-16v-18h1z" fill="#5a4c90" />
      <path d="M985 392h50v74H985z" fill="#44417c" />
      <path d="M985 404h30v60H985z" fill="#46296f" />
      <path d="M1016 420h18v60l-10 26-20-40 8-10z" fill="#282a78" />
      <path d="M706 489h329v43H797v-33h-91z" fill="#50467e" />
      <path d="M604 471h92v27h-27l-9-10z" fill="#443a80" />
      <path d="M286 403.500h699v-14h44" stroke="#a862b8" strokeWidth="2" />
      <path d="M236.500 440v-30l5-6h18l5 4" stroke="#a862b8" />
      <path d="M240 440v-28l6-9h54l8 2M988 404v-12h28M1033.500 394v74" stroke="#7f92b0" />

      {/* rows of vias on the inner planes */}
      {chipColumns.map((x) => (
        <path key={x} transform={`translate(${x} 0)`} d={hexRow(504) + hexRow(515)} stroke={x < 650 ? "#c84444" : "#8c3c78"} />
      ))}

      {chipColumns.map((x) => (
        <Chip key={x} x={x} />
      ))}

      {/* address bus */}
      <path d="M282 463.500h408M704 463.500h298l20 20v26M320 467.500h360M720 467.500h280" stroke="#2878d0" />
      <path d="M300 465.500h700M1005 470l6 20 14 16" stroke="#7088a8" />

      {/* selected devices */}
      <path d="M273.500 389.500h81v136h-81z" fill="#fff" fillOpacity=".18" stroke="#d8d0d8" />
      <path d="M860.500 389.500h82v136h-82z" fill="#a0a0ff" fillOpacity=".2" stroke="#9a98d8" />
      <path
        d="M221.500 427V387.500H1035.500V532.500H796.500V499.500H706.500V405M664 488l5 11h37M660 488.500H316M306 424v22H264L261 442H238L236 445H220.500V427"
        stroke="#0000ff"
      />

      {/* address column */}
      {range(11).map((i) => (
        <g key={i}>
          <path d={ringAt(1023, 392 + i * 7) + ringAt(1027, 394 + i * 7)} stroke="#0000ff" />
          <path d={`M1023 ${392 + i * 7}h3v3h-3z`} fill="#a052b8" />
          <path d={ringAt(1040, 395 + i * 13)} stroke="#f08080" />
        </g>
      ))}
      <path d={[475, 485, 498, 503].map((y, i) => ringAt(1023 + (i % 2) * 2, y)).join("")} stroke="#0000ff" />

      {/* via chains above the edge connector */}
      <path
        d={[...range(27).map((i) => 258 + i * 11), ...range(23).map((i) => 775 + i * 11)]
          .map((x, i) => hexAt(x, 536) + (i % 4 ? ringAt(x + 2, 553) : ""))
          .join("")}
        stroke="#f08080"
      />
      <path d={range(16).map((i) => ringAt(590 + i * 11, 552 + (i % 3) * 2)).join("")} stroke="#f08080" />
      <path d="M262 541.500h290M770 541.500h216M246 559.500h314M578 559.500h462" stroke="#f08080" />
      <path d="M262 546h288M774 546h240" stroke="#f08080" strokeWidth="2" />
      <path d="M246 573.500h314M578 573.500h462" stroke="#7fc08f" />
      <path d="M248 536l30-30v-28l8-10M552 546h50M612 531h32l22-23h12M704 508l40 38" stroke="#3898c8" strokeWidth="2" />
      <path d={[276, 283, 272, 270, 273, 261, 268, 258, 248, 254].map((x, i) => ringAt(x, 452 + i * 8)).join("")} stroke="#f08080" />

      {/* bottom notch */}
      <path d="M561 578V558Q561 549 569 549Q577 549 577 558V578z" fill="#000" />
      <path d="M560.500 573V558Q561 549 569 549Q577 549 577.500 558V573" stroke="#f08080" />

      {/* clusters near the middle of the board */}
      <path d="M679 450h25v50h-25z" fill="#30307c" />
      <path
        d="M682 451h6v12h-6zM690 449h5v6h-5zM678 466h12v6h-12zM679 484h5v10h-5zM687 486h5v5h-5zM696 483h5v13h-8v-5h3zM679 509h21v5h-21zM602 533h11v11h-11zM683 534h4v3h4v-3h4v10h-12zM716 534h4v3h4v-3h4v10h-12zM742 542h10v10h-10zM710 545h6v6h-6zM545 545h9v-8h16v11h-9v-7h-6v9h-10z"
        fill={SKY}
      />
      <path d="M683.500 453.500h4v8h-4zM684.500 487.500h11v11h-11z" stroke="#c070c8" />
      <path d="M707.500 545.500h9v6h-9z" stroke="#fff" />
      <path d={[684, 690, 698, 636, 640].map((x, i) => ringAt(x, i < 3 ? 503 : 548)).join("")} stroke="#f08080" />

      {/* corner block */}
      <path d="M220.500 533.500h18v6h26v14h-12v3l-12 1-6-5h-14z" fill="#503c98" stroke="#0000ff" />
      <path d="M223 536h3v3h-3zM232 536h3v3h-3zM232 486h3v3h-3zM232 424h3v3h-3zM232 392h3v3h-3zM251 391h3v3h-3zM263 395h3v3h-3z" fill="#0000ff" />
      <path d="M239 540h10v5h-10zM268 537h10v5h-10zM272 544h5v5h-5z" fill={SKY} />

      {capColumns.map((x) => (
        <g key={x}>
          <path d={`M${x + 0.5} 550v9`} stroke="#d0a0a8" strokeWidth="3" />
          <path d={`M${x - 2} 536h5v15h-5z`} fill={SKY} />
        </g>
      ))}
      {fingerColumns.map((x, i) => (
        <Finger key={x} x={x} flip={i % 3 !== 0} />
      ))}

      <path
        d="M1049 393h5v5h-5zM1049 405h5v5h-5zM1049 413h5v15h-5zM1043 430h5v5h-5zM1049 440h5v9h-5zM1044 449h5v10h-5zM1043 475h10v5h-10zM1043 488h5v12h-5zM1043 504h5v10h-5zM1034 513h9v17h-19v-11h10zM1012 530h5v20h-5zM1032 539h5v13h-5z"
        fill={SKY}
      />

      <circle cx="232" cy="563" r="12" stroke="#f08080" strokeDasharray="26 50" strokeDashoffset="-46" />
      <circle cx="232" cy="563" r="10" fill="#454444" stroke="#7fc08f" />
      <circle cx="1060" cy="563" r="12" stroke="#f08080" strokeDasharray="40 36" strokeDashoffset="-36" />
      <circle cx="1060" cy="563" r="10" fill="#1f2e24" stroke="#7fc08f" />

      {/* rotation handle */}
      <path d="M333.500 470v8" stroke="#fff" strokeWidth="3" />
      <path d="M333.500 470v7" stroke="#000" />
      <path d="M329.500 484.500h10v9h-10z" fill="#b070d8" fillOpacity=".6" stroke="#b080e0" />
      <path d="M332 486h5v5h-5z" fill="#d890f8" />
      <circle cx="333.500" cy="464.500" r="6" fill="#fff" />
      <circle cx="333.500" cy="464.500" r="5.500" fill="#00ff00" stroke="#000" />
    </g>
  )
}

const gridX = range(16).map((i) => Math.round(153 + i * 64.3))
const gridY = range(10).map((i) => Math.round(192 + i * 64.2))

function LayoutCanvas() {
  return (
    <svg
      viewBox="143 157 1006 650"
      preserveAspectRatio="xMidYMid slice"
      className="block min-h-0 w-full flex-1 bg-black"
      shapeRendering="crispEdges"
      role="img"
      aria-label="PC3_UDIMM_U1_U7 board layout"
    >
      <path d="M217.500 157v650M143 577.500h1006" stroke="#2f4f4f" />
      {gridY.map((y) => gridX.map((x) => <rect key={`${x}-${y}`} x={x} y={y} width="1" height="1" fill="#aaa" />))}
      <Board />
      {[217, 538, 860].map((x) => (
        <path key={x} d={`M${x - 2} 255.500h5M${x + 0.5} 253v5M${x - 2} 577.500h5M${x + 0.5} 575v5`} stroke="#ccc" />
      ))}
      <path d="M213 577.500h9M217.500 573v9" stroke="#ccc" />
      <rect x="188.500" y="355.500" width="915" height="253" fill="none" stroke="#ff78c8" />
    </svg>
  )
}

function CanvasArea() {
  return (
    <main className="ml-[5px] flex min-w-0 flex-1">
      <div className="flex min-w-0 flex-1 flex-col">
        <LayoutCanvas />
        <div className="flex h-[21px] shrink-0 items-center border-t border-white">
          <button type="button" aria-label="Scroll left" className="flex w-5 justify-center">
            <ChevronLeft className="h-4 w-4 text-[#505050]" strokeWidth={3} />
          </button>
          <div className="flex h-full flex-1 justify-center">
            <div className="h-[19px] w-[22px] bg-[#cdcdcd]" />
          </div>
          <button type="button" aria-label="Scroll right" className="flex w-5 justify-center">
            <ChevronRight className="h-4 w-4 text-[#505050]" strokeWidth={3} />
          </button>
        </div>
      </div>
      <div className="mb-[21px] flex w-[21px] shrink-0 flex-col items-center border-l border-white">
        <button type="button" aria-label="Scroll up" className="flex h-[21px] items-center">
          <ChevronUp className="h-4 w-4 text-[#505050]" strokeWidth={3} />
        </button>
        <div className="flex w-full flex-1 items-center">
          <div className="h-[22px] w-[19px] bg-[#cdcdcd]" />
        </div>
        <button type="button" aria-label="Scroll down" className="flex h-[21px] items-center">
          <ChevronDown className="h-4 w-4 text-[#505050]" strokeWidth={3} />
        </button>
      </div>
    </main>
  )
}

// ---------- quick help ----------

function QuickHelp() {
  const [hidden, setHidden] = useState(false)

  return (
    <aside className="ml-[5px] flex w-[351px] shrink-0 flex-col font-['Liberation_Mono'] text-[13px] text-black">
      <DockTitle side="right">Command Quick Help - Select</DockTitle>
      <div className="mt-[2px] flex h-[25px] shrink-0 items-center bg-white pl-[10px]">
        <button type="button" aria-label="Help settings">
          <svg viewBox="-8 -8 16 16" className="h-4 w-4" fill="none" aria-hidden="true">
            <circle r="4.500" stroke="#4f7fcf" strokeWidth="3" />
            {gearAngles.map((a) => (
              <path key={a} transform={`rotate(${a})`} d="M-1.500-5.500h3V-8h-3z" fill="#4f7fcf" />
            ))}
          </svg>
        </button>
      </div>
      <div className="mt-[7px] min-h-0 flex-1 border border-r-0 border-[#828282] bg-white pt-1 pl-[3px] leading-[17px] whitespace-nowrap">
        <p>
          <b>Click</b> and <b>drag</b> to select vertices
        </p>
        <p>
          Press <b>V</b> for combined vertex/object
          <br />
          selection (disabled)
        </p>
        <p>
          Press and hold <b>Ctrl</b>, then Click and drag
          <br />
          to select more vertices or objects
        </p>
        <p className="mb-[17px]">
          Press and hold <b>Shift</b>, then Click to
          <br />
          deselect
        </p>
        <p>
          Press <b>M</b> to Move an object using reference
        </p>
        <p>
          Press <b>Space</b> to Select the next overlapping
          <br />
          object
        </p>
        <p>
          Press <b>Shift+Space</b> to Select the previous
          <br />
          overlapping object
        </p>
        <p>
          Press <b>C</b> to Copy an object using reference
        </p>
        <p>
          Press <b>Ctrl+R</b> to Rotate an object
        </p>
        <p>
          Press <b>Shift+X</b> to Mirror an object about x-
          <br />
          axis
        </p>
        <p>
          Press <b>Shift+Y</b> to Mirror an object about y-
          <br />
          axis
        </p>
        <p>
          Press <b>Ctrl+M</b> to Measure an object
        </p>
      </div>
      <label className="flex h-[26px] shrink-0 items-end gap-1 whitespace-nowrap">
        <input
          type="checkbox"
          checked={hidden}
          onChange={(e) => setHidden(e.target.checked)}
          className="mb-[2px] h-4 w-4 shrink-0 appearance-none border border-[#333] bg-white checked:bg-[#0078d7]"
        />
        <span className="leading-[17px]">Don't show this window for Select command</span>
      </label>
    </aside>
  )
}

function StatusBar() {
  return (
    <footer className="relative flex h-[25px] shrink-0 items-center bg-[#f0f0f0] text-[16px] leading-5 whitespace-nowrap text-black">
      <span className="min-w-0 flex-1">Select: Click and drag to select.</span>
      <span className="w-[149px] border-l border-[#d7d7d7] pl-2">Pin GND-U1_A1</span>
      <span className="h-5 w-[106px] border-l border-[#d7d7d7]" />
      <span className="w-[168px] border-l border-[#d7d7d7] pl-1 text-[#ff78d0]">EEM_CUTTER:drawing</span>
      <span className="w-[156px] border-l border-[#d7d7d7] pl-2">60.000, -30.000</span>
      <span className="w-[157px] border-l border-[#d7d7d7] pl-[10px]">60.000, -30.000</span>
      <span className="w-[41px] border-l border-[#d7d7d7] pl-[10px]">mm</span>
      <span className="flex h-5 w-[19px] items-end justify-end border-l border-[#d7d7d7]">
        <svg viewBox="0 0 10 12" className="h-3 w-[10px]" shapeRendering="crispEdges" aria-hidden="true">
          <path d="M8 0h2v2H8zM4 4h2v2H4zM8 4h2v2H8zM0 8h2v2H0zM4 8h2v2H4zM8 8h2v2H8z" fill="#a8a8a8" />
        </svg>
      </span>
      <span className="pointer-events-none absolute right-2 bottom-[5px] text-[15px] text-white/60 [text-shadow:1px_1px_1px_#cccccc]">
        https://blog.csdn.net/zb6075_lb
      </span>
    </footer>
  )
}

export default function App() {
  return (
    <div className="flex h-screen flex-col overflow-hidden bg-[#f0f0f0] font-['Open_Sans',sans-serif]">
      <header className="flex h-[29px] shrink-0 items-start bg-white pl-[3px]">
        <svg viewBox="0 0 20 20" className="h-5 w-5 shrink-0" fill="none" aria-hidden="true">
          <rect width="20" height="20" rx="2" fill="#1c1c22" />
          <path d="M3 4h9M6 4v4.500h11M12 8.500h3q3 0 3 3t-3 3.500H7" stroke="#f4c020" strokeWidth="2" />
        </svg>
        <h1 className="ml-[5px] flex-1 text-[16px] leading-[21px] whitespace-nowrap text-black">
          PC3_UDIMM_U1_U7_adfi [PC3-UDIMM_U1_U7_lib:PC3_UDIMM_U1_U7_adfi:layout] (Layout):15
        </h1>
        <div className="flex h-[21px] items-center">
          <button type="button" aria-label="Minimize" className="flex h-5 w-[58px] items-center justify-center">
            <span className="h-px w-3 bg-black" />
          </button>
          <button type="button" aria-label="Maximize" className="flex h-5 w-[58px] items-center justify-center">
            <span className="h-3 w-3 border border-black" />
          </button>
          <button type="button" aria-label="Close" className="flex h-5 w-[55px] items-center justify-center">
            <X className="h-5 w-5" strokeWidth={1} />
          </button>
        </div>
      </header>

      <nav className="flex h-[26px] shrink-0 items-center gap-[15px] bg-white pl-[2px] text-[16px] text-black">
        {menus.map((item) => (
          <button key={item} type="button" className="whitespace-nowrap">
            {item}
          </button>
        ))}
      </nav>

      <Toolbars />

      <div className="flex min-h-0 flex-1">
        <PartsPanel />
        <CanvasArea />
        <QuickHelp />
      </div>

      <StatusBar />

      {/* sliver of the window behind this one */}
      <div className="h-[3px] shrink-0 overflow-hidden border-t border-[#2a86d0] bg-[#c4c8cc] pl-[62px]">
        <p className="text-[15px] leading-[10px] whitespace-nowrap text-[#222]">
          Designing LNA with QFN Package using Multi-Technology Flow
        </p>
      </div>
    </div>
  )
}
